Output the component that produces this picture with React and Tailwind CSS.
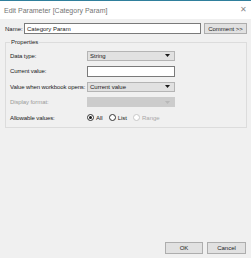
import React from 'react';

const font = { fontFamily: '"Liberation Sans", Arial, sans-serif' };

const Arrow = ({ muted }) => (
  <svg width="5" height="3" viewBox="0 0 5 3" className="shrink-0">
    <path d="M0 0 L5 0 L2.5 3 Z" fill={muted ? '#b8b8b8' : '#1a1a1a'} />
  </svg>
);

const Select = ({ value, disabled }) => (
  <div
    className={`w-[88px] h-[10px] flex items-center justify-between pl-[2px] pr-[4px] border ${
      disabled ? 'bg-[#cccccc] border-[#cccccc]' : 'bg-[#e1e1e1] border-[#b4b4b4]'
    }`}
  >
    <span className="text-[6px] leading-none text-[#1a1a1a] whitespace-nowrap">{value}</span>
    <Arrow muted={disabled} />
  </div>
);

const Row = ({ label, muted, children }) => (
  <div className="flex items-center h-[15.5px]">
    <span
      className={`w-[77px] shrink-0 text-[6px] leading-none whitespace-nowrap tracking-[-0.1px] ${
        muted ? 'text-[#9a9a9a]' : 'text-[#1a1a1a]'
      }`}
    >
      {label}
    </span>
    {children}
  </div>
);

const Radio = ({ label, checked, disabled }) => (
  <div className="flex items-center gap-[2px] mr-[6px]">
    <div
      className={`w-[7px] h-[7px] rounded-full border flex items-center justify-center bg-white ${
        disabled ? 'border-[#c8c8c8]' : 'border-[#333333]'
      }`}
    >
      {checked && <div className="w-[3px] h-[3px] rounded-full bg-[#1a1a1a]" />}
    </div>
    <span className={`text-[6px] leading-none ${disabled ? 'text-[#a8a8a8]' : 'text-[#1a1a1a]'}`}>{label}</span>
  </div>
);

export default function App() {
  return (
    <div className="w-[251px] h-[258px] bg-[#f0f0f0] flex flex-col border-t border-[#2f7f9c]" style={font}>
      {/* Title bar */}
      <div className="h-[18px] bg-white flex items-center justify-between pl-[4px] pr-[4px]">
        <span className="text-[7px] leading-none text-[#747474] whitespace-nowrap">Edit Parameter [Category Param]</span>
        <span className="text-[8px] leading-none text-[#8a8a8a]">✕</span>
      </div>

      {/* Name row */}
      <div className="flex items-center mt-[4px] pl-[5px] h-[11px]">
        <span className="w-[19px] text-[6px] leading-none text-[#1a1a1a]">Name:</span>
        <div className="w-[177px] h-[11px] bg-white border border-[#7a7a7a] flex items-center pl-[2px]">
          <span className="text-[6px] leading-none text-[#1a1a1a]">Category Param</span>
        </div>
        <div className="ml-[3px] w-[43px] h-[11px] bg-[#e1e1e1] border border-[#adadad] flex items-center justify-center">
          <span className="text-[6px] leading-none text-[#1a1a1a] whitespace-nowrap">Comment &gt;&gt;</span>
        </div>
      </div>

      {/* Properties group */}
      <fieldset className="mt-[5px] mx-[5px] w-[242px] border border-[#dcdcdc] pl-[4px] pb-[1px] pt-[3px]">
        <legend className="ml-0 px-[1px] text-[6px] leading-none text-[#1a1a1a]">Properties</legend>
        <Row label="Data type:">
          <Select value="String" />
        </Row>
        <Row label="Current value:">
          <div className="w-[88px] h-[11px] bg-white border border-[#7a7a7a]" />
        </Row>
        <Row label="Value when workbook opens:">
          <Select value="Current value" />
        </Row>
        <Row label="Display format:" muted>
          <Select value="" disabled />
        </Row>
        <Row label="Allowable values:">
          <div className="flex items-center">
            <Radio label="All" checked />
            <Radio label="List" />
            <Radio label="Range" disabled />
          </div>
        </Row>
      </fieldset>

      <div className="flex-1" />

      {/* Footer buttons */}
      <div className="flex justify-end gap-[4px] pr-[5px] pb-[4px]">
        <div className="w-[38px] h-[12px] bg-[#e1e1e1] border border-[#adadad] flex items-center justify-center">
          <span className="text-[6px] leading-none text-[#1a1a1a]">OK</span>
        </div>
        <div className="w-[39px] h-[12px] bg-[#e1e1e1] border border-[#adadad] flex items-center justify-center">
          <span className="text-[6px] leading-none text-[#1a1a1a]">Cancel</span>
        </div>
      </div>
    </div>
  );
}
